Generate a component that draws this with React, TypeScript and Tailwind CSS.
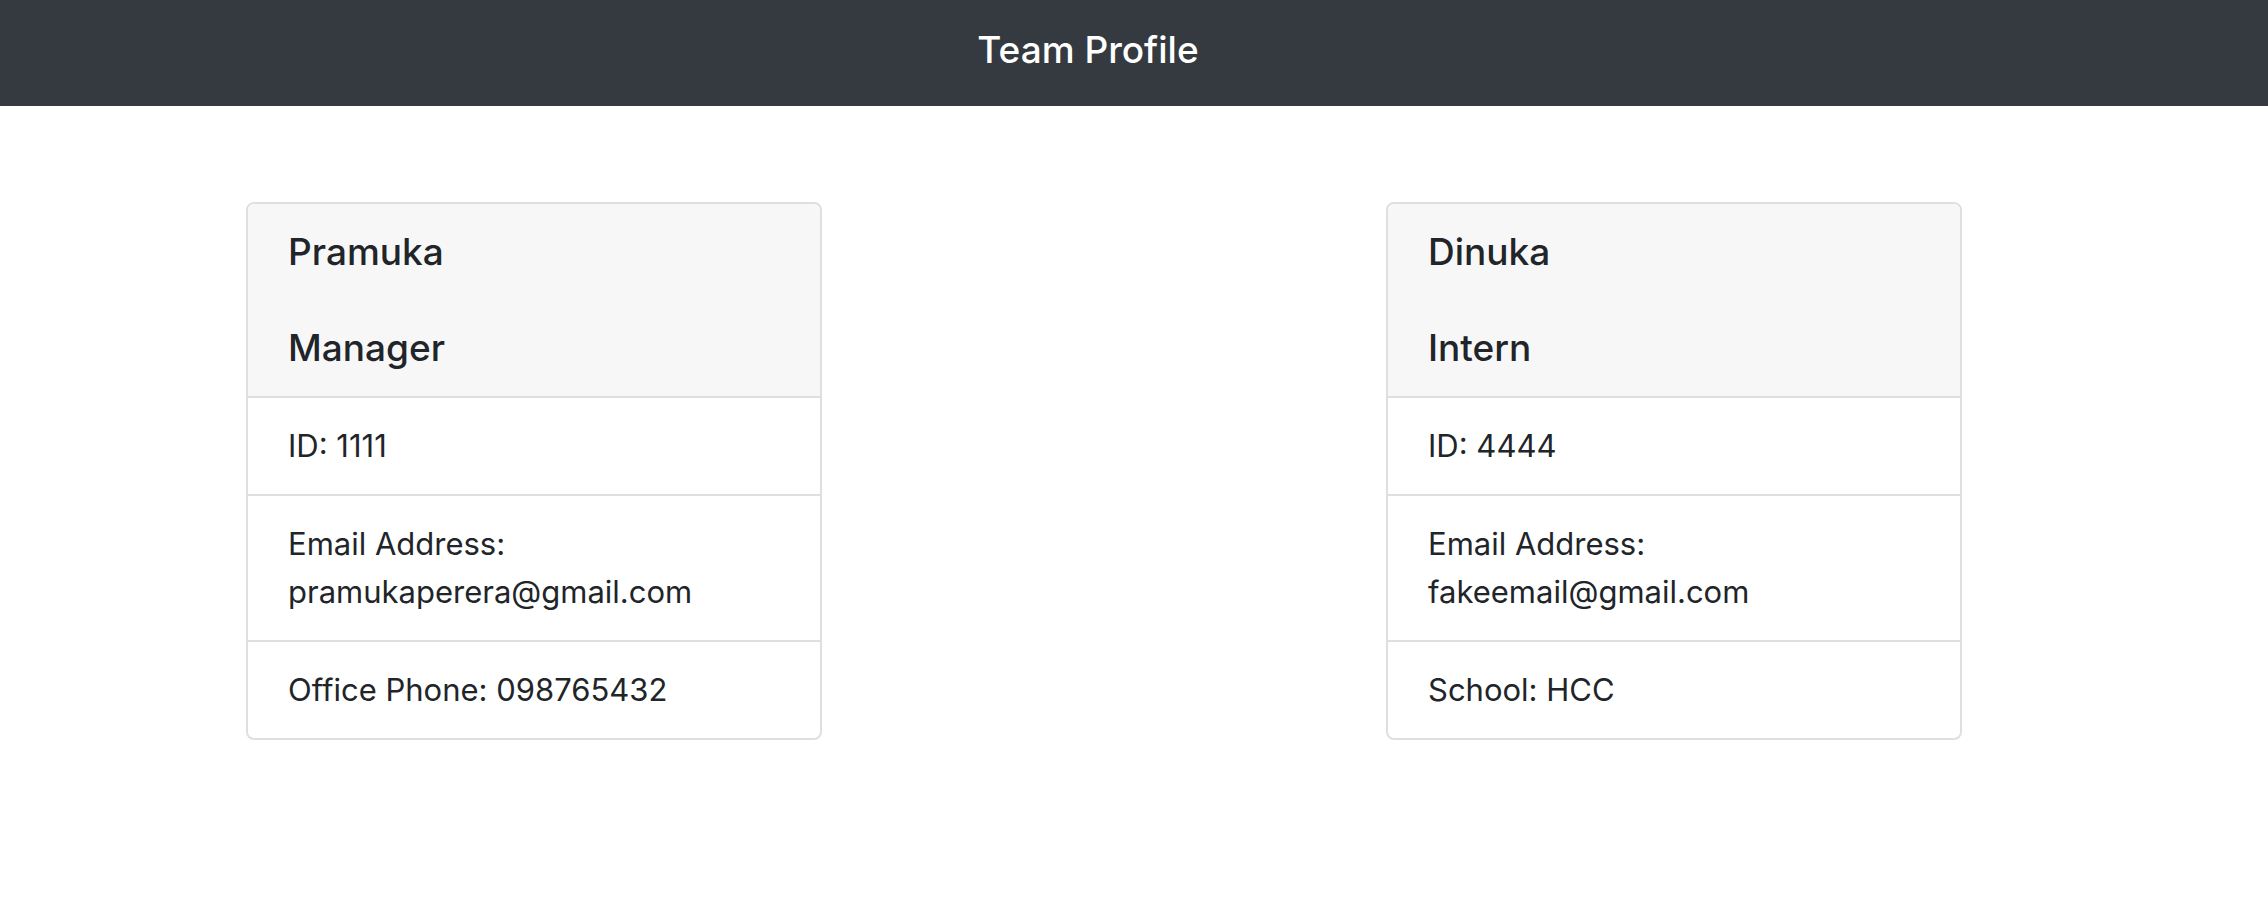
const team = [
  {
    name: "Pramuka",
    role: "Manager",
    id: "1111",
    email: "pramukaperera@gmail.com",
    extra: "Office Phone: 098765432",
  },
  {
    name: "Dinuka",
    role: "Intern",
    id: "4444",
    email: "fakeemail@gmail.com",
    extra: "School: HCC",
  },
];

function EmployeeCard({ member }: { member: (typeof team)[number] }) {
  return (
    <div className="w-[576px] rounded-[8px] border-2 border-[#dfdfdf] bg-white overflow-hidden">
      {/* Card header */}
      <div className="bg-[#f7f7f7] border-b-2 border-[#dfdfdf] px-[40px] pt-[24px] pb-[24px] text-[#212529]">
        <h5 className="text-[37px] leading-[48px] font-medium mb-[48px]">{member.name}</h5>
        <h5 className="text-[37px] leading-[48px] font-medium">{member.role}</h5>
      </div>

      {/* Details */}
      <ul className="text-[31px] leading-[48px] text-[#212529]">
        <li className="px-[40px] py-[24px] border-b-2 border-[#dfdfdf]">ID: {member.id}</li>
        <li className="px-[40px] py-[24px] border-b-2 border-[#dfdfdf]">
          <span className="block">Email Address:</span>
          <span className="block">{member.email}</span>
        </li>
        <li className="px-[40px] py-[24px]">{member.extra}</li>
      </ul>
    </div>
  );
}

export default function App() {
  return (
    <div className="min-h-[910px] bg-white" style={{ fontFamily: "Inter, 'Noto Sans', sans-serif" }}>
      {/* Navbar */}
      <nav className="h-[106px] bg-[#343a40] flex items-center justify-center pr-[92px]">
        <span className="text-white text-[37px] font-medium leading-none -mt-[8px]">Team Profile</span>
      </nav>

      {/* Cards */}
      <main className="flex items-start gap-[564px] pl-[246px] mt-[96px]">
        {team.map((member) => (
          <EmployeeCard key={member.id} member={member} />
        ))}
      </main>
    </div>
  );
}
